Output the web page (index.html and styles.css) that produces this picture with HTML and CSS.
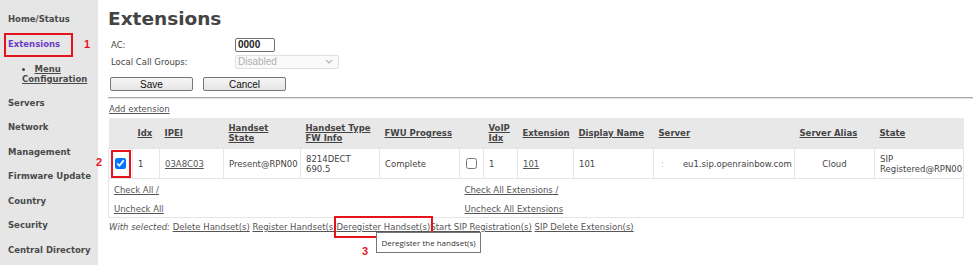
FILE: index.html
```html
<!DOCTYPE html>
<html lang="en">
<head>
    <meta charset="UTF-8">
    <title>Extensions</title>
    <link rel="stylesheet" href="styles.css">
</head>
<body>
    <aside class="menu">
        <a href="#" class="menu-item">Home/Status</a>
        <a href="#" class="menu-item active">Extensions</a>
        <ul class="submenu">
            <li><a href="#">Menu Configuration</a></li>
        </ul>
        <a href="#" class="menu-item">Servers</a>
        <a href="#" class="menu-item">Network</a>
        <a href="#" class="menu-item">Management</a>
        <a href="#" class="menu-item">Firmware Update</a>
        <a href="#" class="menu-item">Country</a>
        <a href="#" class="menu-item">Security</a>
        <a href="#" class="menu-item">Central Directory</a>
    </aside>

    <main class="content">
        <h1 class="title">Extensions</h1>

        <table class="form">
            <tr>
                <td class="label">AC:</td>
                <td><input class="ac" type="text" value="0000"></td>
            </tr>
            <tr>
                <td class="label">Local Call Groups:</td>
                <td>
                    <span class="select">
                        <span>Disabled</span>
                        <svg width="8" height="5" viewBox="0 0 8 5"><path d="M1 1 L4 4 L7 1" fill="none" stroke="#b5b5b5" stroke-width="1.1"/></svg>
                    </span>
                </td>
            </tr>
        </table>

        <div class="buttons">
            <button>Save</button>
            <button>Cancel</button>
        </div>

        <hr class="sep">

        <a href="#" class="link add">Add extension</a>

        <table class="ext">
            <colgroup>
                <col style="width:24px"><col style="width:27px"><col style="width:64px">
                <col style="width:77px"><col style="width:79px"><col style="width:80px">
                <col style="width:24px"><col style="width:34px"><col style="width:56px">
                <col style="width:80px"><col style="width:141px"><col style="width:80px">
                <col style="width:89px">
            </colgroup>
            <thead>
                <tr>
                    <th></th>
                    <th><a href="#">Idx</a></th>
                    <th><a href="#">IPEI</a></th>
                    <th><a href="#">Handset<br>State</a></th>
                    <th><a href="#">Handset Type<br>FW Info</a></th>
                    <th><a href="#">FWU Progress</a></th>
                    <th></th>
                    <th><a href="#">VoIP<br>Idx</a></th>
                    <th><a href="#">Extension</a></th>
                    <th><a href="#">Display Name</a></th>
                    <th><a href="#">Server</a></th>
                    <th><a href="#">Server Alias</a></th>
                    <th><a href="#">State</a></th>
                </tr>
            </thead>
            <tbody>
                <tr class="row">
                    <td class="chk"><input type="checkbox" checked></td>
                    <td>1</td>
                    <td><a href="#" class="link">03A8C03</a></td>
                    <td>Present@RPN00</td>
                    <td>8214DECT<br>690.5</td>
                    <td>Complete</td>
                    <td class="chk"><input type="checkbox"></td>
                    <td>1</td>
                    <td><a href="#" class="link">101</a></td>
                    <td>101</td>
                    <td><span class="dim">:</span>eu1.sip.openrainbow.com</td>
                    <td class="center">Cloud</td>
                    <td>SIP<br>Registered@RPN00</td>
                </tr>
                <tr class="check">
                    <td colspan="6"><a href="#" class="link">Check All /</a></td>
                    <td colspan="7"><a href="#" class="link">Check All Extensions /</a></td>
                </tr>
                <tr class="check last">
                    <td colspan="6"><a href="#" class="link">Uncheck All</a></td>
                    <td colspan="7"><a href="#" class="link">Uncheck All Extensions</a></td>
                </tr>
            </tbody>
        </table>

        <p class="actions">
            <em>With selected:</em>
            <a href="#" class="link">Delete Handset(s)</a>
            <a href="#" class="link">Register Handset(s)</a><a href="#" class="link">Deregister Handset(s)</a><a href="#" class="link">Start SIP Registration(s)</a>
            <a href="#" class="link">SIP Delete Extension(s)</a>
        </p>
    </main>

    <!-- annotations -->
    <div class="mark box1"></div>
    <div class="mark box2"></div>
    <div class="mark box3"></div>
    <span class="num n1">1</span>
    <span class="num n2">2</span>
    <span class="num n3">3</span>
    <div class="tooltip">Deregister the handset(s)</div>
</body>
</html>
```

FILE: styles.css
```css
/* Global */
body {
    margin: 0;
    font-family: "DejaVu Sans", Verdana, sans-serif;
    font-size: 8.5px;
    color: #444;
    background: #fff;
    display: flex;
    min-height: 265px;
}

a {
    color: #555;
}

/* Menu */
.menu {
    width: 98px;
    flex-shrink: 0;
    background-color: #e6e6e6;
    padding-top: 12px;
    display: flex;
    flex-direction: column;
}

.menu-item {
    display: block;
    padding-left: 8px;
    height: 24.5px;
    line-height: 14px;
    font-weight: bold;
    color: #4a4a4a;
    text-decoration: none;
}

.menu-item.active {
    color: #6c3cc8;
}

.submenu {
    list-style: disc inside;
    margin: 2.5px 0 0;
    padding: 0 0 0 22px;
    height: 32px;
    font-weight: bold;
    line-height: 10px;
}

.submenu a {
    color: #4a4a4a;
}

/* Content */
.content {
    flex: 1;
    padding: 9px 0 0 10px;
}

.title {
    margin: 0;
    font-size: 18.5px;
    line-height: 20px;
    color: #444;
}

.form {
    border-collapse: collapse;
    margin: 7px 0 0 1px;
}

.form td {
    padding: 0 2px;
    height: 17px;
}

.form .label {
    width: 120px;
}

.ac {
    box-sizing: border-box;
    width: 40px;
    height: 14px;
    padding: 0 2px;
    border: 1px solid #707070;
    border-radius: 2px;
    font-family: "Liberation Sans", Arial, sans-serif;
    font-size: 10px;
    font-weight: bold;
    color: #222;
}

.select {
    box-sizing: border-box;
    display: flex;
    align-items: center;
    justify-content: space-between;
    width: 104px;
    height: 14px;
    padding: 0 5px 0 2px;
    border: 1px solid #e0e0e0;
    border-radius: 2px;
    background: #fafafa;
    font-family: "Liberation Sans", Arial, sans-serif;
    font-size: 10px;
    color: #b0b0b0;
}

.buttons {
    display: flex;
    gap: 10px;
    margin: 7px 0 0 2px;
}

button {
    width: 83px;
    height: 14px;
    padding: 0;
    border: 1px solid #767676;
    border-radius: 2px;
    background: linear-gradient(#f6f6f6, #e4e4e4);
    font-family: "Liberation Sans", Arial, sans-serif;
    font-size: 10px;
    color: #111;
}

.sep {
    margin: 6px 0 0;
    border: 0;
    border-top: 1px solid #a8a8a8;
    border-bottom: 1px solid #e2e2e2;
}

.add {
    display: block;
    width: max-content;
    margin: 3px 0 0 1px;
    line-height: 14px;
}

/* Table */
.ext {
    table-layout: fixed;
    width: 855px;
    border-collapse: collapse;
    margin-top: 2px;
}

.ext th {
    height: 30px;
    padding: 0 0 0 5px;
    background-color: #e8e8e8;
    text-align: left;
    font-weight: bold;
    line-height: 10px;
}

.ext th a {
    color: #444;
}

.ext td {
    padding: 0 0 0 5px;
    line-height: 10px;
    white-space: nowrap;
    overflow: hidden;
}

.row td {
    height: 29px;
    border: 1px solid #e6e6e6;
}

.row td.chk {
    padding: 0;
    text-align: center;
}

.row td.center {
    padding: 0;
    text-align: center;
}

.chk input {
    width: 11px;
    height: 11px;
    margin: 0;
    vertical-align: middle;
}

.dim {
    color: #bbb;
    padding-right: 19px;
    padding-left: 2px;
}

.check td {
    height: 17px;
    padding-top: 2px;
}

.check td:first-child {
    border-left: 1px solid #e6e6e6;
}

.check td:last-child {
    border-right: 1px solid #e6e6e6;
}

.check.last td {
    border-bottom: 1px solid #e6e6e6;
}

.actions {
    margin: 2px 0 0 1px;
    line-height: 14px;
}

.actions em {
    color: #555;
}

/* Annotations */
.mark {
    position: absolute;
    box-sizing: border-box;
    border: 2px solid #e5141b;
}

.box1 { left: 4px; top: 33px; width: 69px; height: 24px; }
.box2 { left: 111px; top: 150px; width: 20px; height: 28px; }
.box3 { left: 334px; top: 216px; width: 99px; height: 22px; }

.num {
    position: absolute;
    font-family: "Liberation Sans", Arial, sans-serif;
    font-weight: bold;
    font-size: 11px;
    line-height: 11px;
    color: #e5141b;
}

.n1 { left: 84px; top: 39px; }
.n2 { left: 96px; top: 157px; }
.n3 { left: 362px; top: 246px; }

.tooltip {
    position: absolute;
    left: 376px;
    top: 232px;
    box-sizing: border-box;
    width: 105px;
    height: 21px;
    border: 1px solid #767676;
    background: #fff;
    font-family: "Open Sans", "DejaVu Sans", sans-serif;
    font-size: 8px;
    line-height: 19px;
    text-align: center;
    color: #333;
}
```
